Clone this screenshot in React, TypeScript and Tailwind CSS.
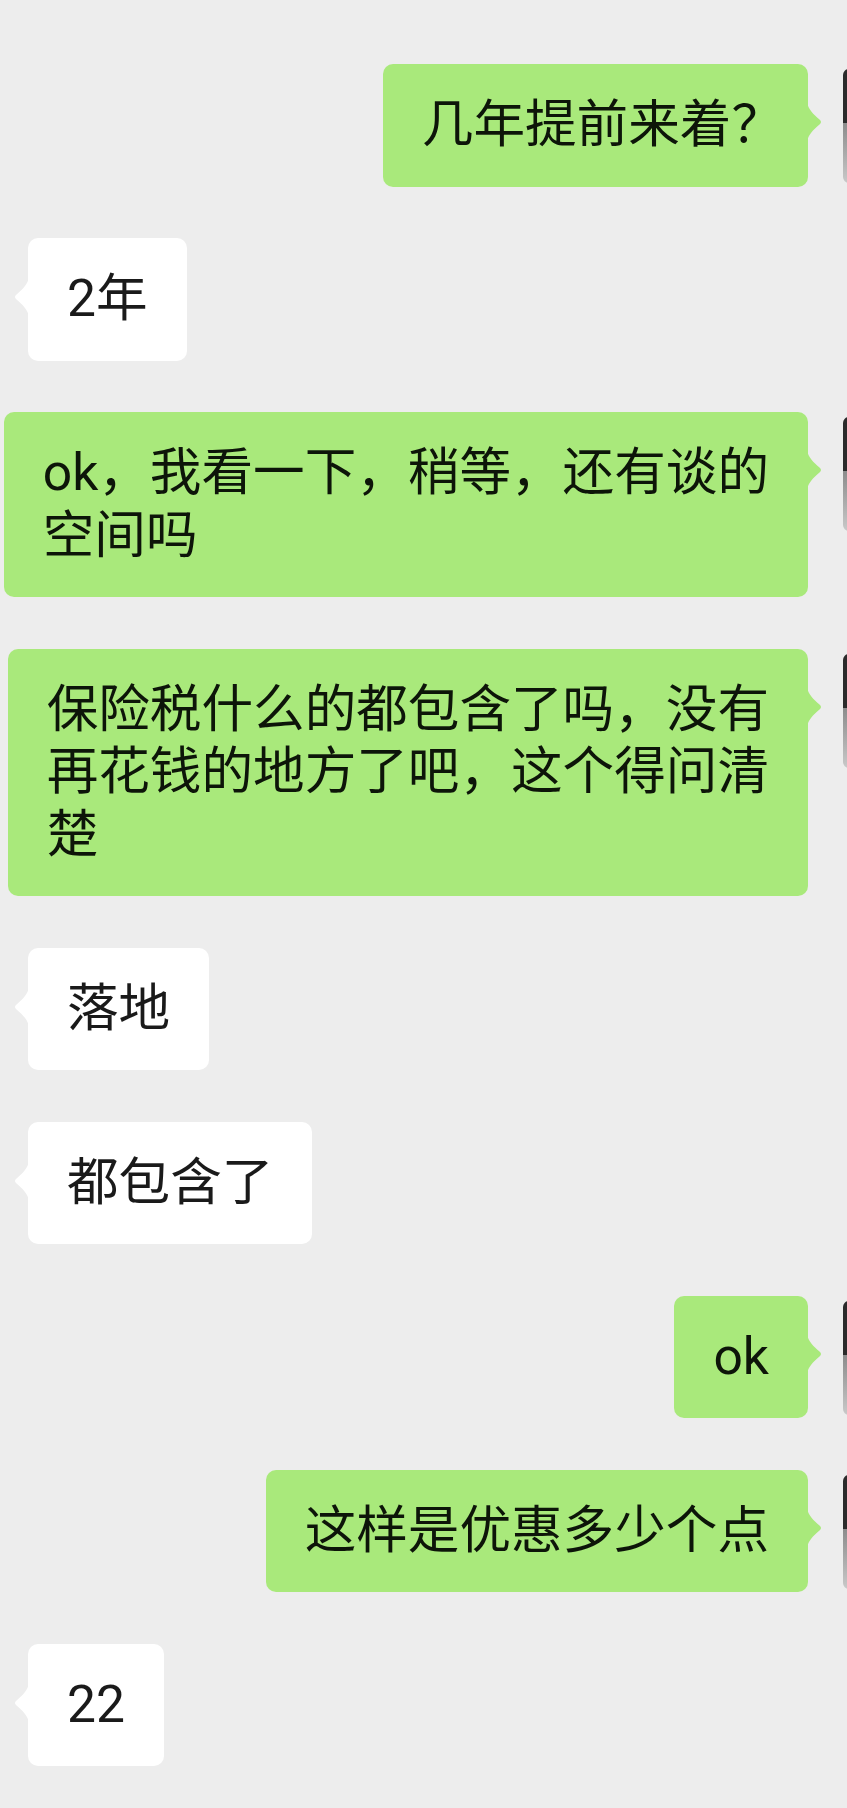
import React from 'react';

type Message = {
  id: number;
  mine: boolean;
  lines: React.ReactNode[];
};

// lines are broken by hand so each bubble hugs its widest line, as on the phone
const messages: Message[] = [
  {
    id: 1,
    mine: true,
    lines: [
      <>
        几年提前来着<span className="mr-[-14px]">？</span>
      </>,
    ],
  },
  { id: 2, mine: false, lines: ['2年'] },
  { id: 3, mine: true, lines: ['ok，我看一下，稍等，还有谈的', '空间吗'] },
  {
    id: 4,
    mine: true,
    lines: ['保险税什么的都包含了吗，没有', '再花钱的地方了吧，这个得问清', '楚'],
  },
  { id: 5, mine: false, lines: ['落地'] },
  { id: 6, mine: false, lines: ['都包含了'] },
  { id: 7, mine: true, lines: ['ok'] },
  { id: 8, mine: true, lines: ['这样是优惠多少个点'] },
  { id: 9, mine: false, lines: ['22'] },
];

const Tail = ({ mine }: { mine: boolean }) => (
  <svg
    width="16"
    height="38"
    viewBox="0 0 16 38"
    className={
      mine
        ? 'absolute top-[39px] -right-[15px] fill-[#a9e97b]'
        : 'absolute top-[40px] -left-[15px] fill-white -scale-x-100'
    }
  >
    <path d="M0 0 C2 7 6 11 12.5 16.5 Q15.5 19 12.5 21.5 C6 27 2 31 0 38 Z" />
  </svg>
);

const Bubble = ({ msg }: { msg: Message }) => (
  <div
    className={`relative rounded-[10px] px-[39px] py-[30px] text-[51.6px] leading-[62.5px] whitespace-nowrap ${
      msg.mine ? 'bg-[#a9e97b] text-[#0d1509]' : 'bg-white text-[#1a1a1a]'
    }`}
  >
    {msg.lines.map((line, i) => (
      <div key={i}>{line}</div>
    ))}
    <Tail mine={msg.mine} />
  </div>
);

export default function App() {
  return (
    <div
      className="min-h-screen w-full overflow-hidden bg-[#ededed] pt-[64px] pb-[40px]"
      style={{ fontFamily: 'Roboto, "Noto Sans CJK SC", sans-serif' }}
    >
      <div className="flex flex-col gap-[51.5px]">
        {messages.map((msg) =>
          msg.mine ? (
            <div key={msg.id} className="flex items-start justify-end">
              <Bubble msg={msg} />
              {/* avatar, mostly cut off by the right edge */}
              <div className="w-[39px] shrink-0 overflow-hidden pl-[35px] pt-[5px]">
                <div className="flex h-[114px] w-[114px] flex-col overflow-hidden rounded-[6px]">
                  <div className="h-[54px] bg-[#2b2b2b]" />
                  <div className="flex-1 bg-gradient-to-b from-[#8c8c8c] to-[#c9c9c9]" />
                </div>
              </div>
            </div>
          ) : (
            <div key={msg.id} className="flex items-start justify-start pl-[28px]">
              <Bubble msg={msg} />
            </div>
          )
        )}
      </div>
    </div>
  );
}
